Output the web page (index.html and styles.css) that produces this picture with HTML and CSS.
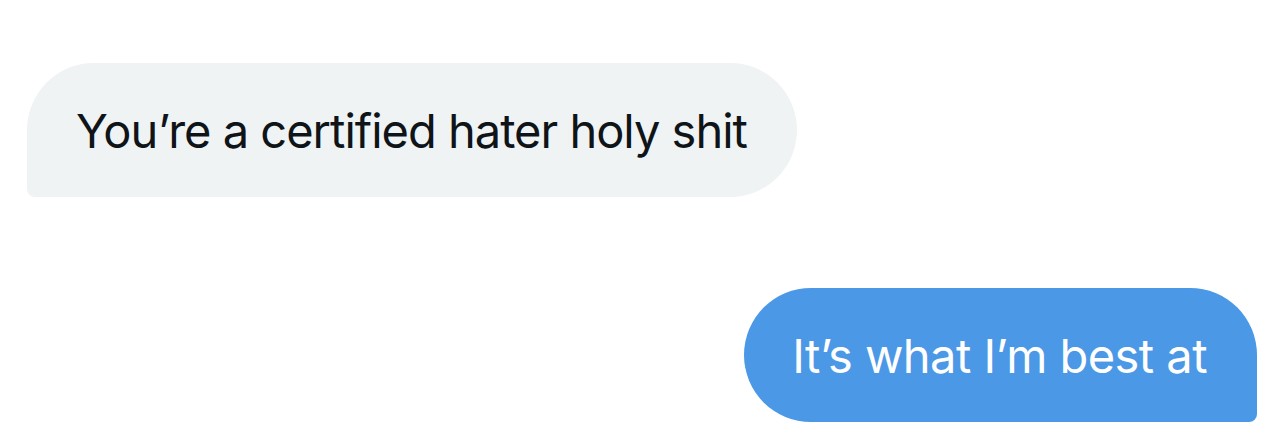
FILE: index.html
```html
<!DOCTYPE html>
<html>
<head>
<meta charset="utf-8">
<link rel="stylesheet" href="styles.css">
</head>
<body>
<div class="thread">
  <div class="msg received">You’re a certified hater holy shit</div>
  <div class="msg sent">It’s what I’m best at</div>
</div>
</body>
</html>
```
FILE: styles.css
```css
html, body {
  margin: 0;
  padding: 0;
  background: #ffffff;
}
.thread {
  display: flex;
  flex-direction: column;
  padding: 63px 27px 0 27px;
  gap: 91px;
  font-family: Inter, "Noto Sans", sans-serif;
}
.msg {
  height: 134px;
  box-sizing: border-box;
  display: flex;
  align-items: center;
  font-size: 47px;
  line-height: 1;
  white-space: nowrap;
}
.received {
  align-self: flex-start;
  background: #eff3f4;
  color: #0f1419;
  letter-spacing: -1px;
  padding: 0 50px 0 49px;
  border-radius: 67px 67px 67px 8px;
}
.sent {
  align-self: flex-end;
  background: #4b98e7;
  color: #ffffff;
  letter-spacing: -0.55px;
  padding: 0 50px 0 48px;
  border-radius: 67px 67px 8px 67px;
}
```
